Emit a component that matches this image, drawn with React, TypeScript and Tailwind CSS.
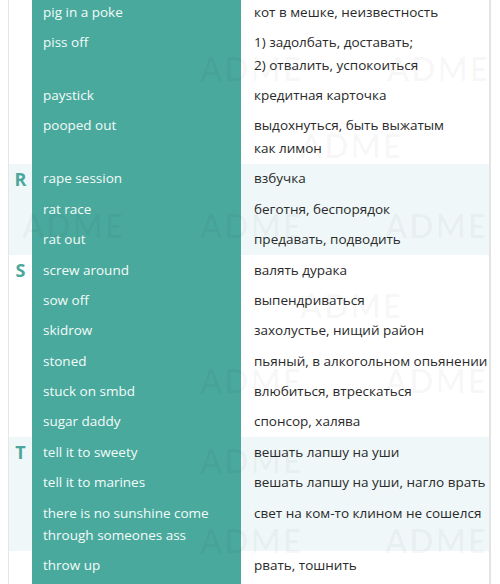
type Row = { en: string[]; ru: string[] };
type Section = { letter: string; tint: boolean; rows: Row[] };

const sections: Section[] = [
  {
    letter: '',
    tint: false,
    rows: [
      { en: ['pig in a poke'], ru: ['кот в мешке, неизвестность'] },
      { en: ['piss off'], ru: ['1) задолбать, доставать;', '2) отвалить, успокоиться'] },
      { en: ['paystick'], ru: ['кредитная карточка'] },
      { en: ['pooped out'], ru: ['выдохнуться, быть выжатым', 'как лимон'] },
    ],
  },
  {
    letter: 'R',
    tint: true,
    rows: [
      { en: ['rape session'], ru: ['взбучка'] },
      { en: ['rat race'], ru: ['беготня, беспорядок'] },
      { en: ['rat out'], ru: ['предавать, подводить'] },
    ],
  },
  {
    letter: 'S',
    tint: false,
    rows: [
      { en: ['screw around'], ru: ['валять дурака'] },
      { en: ['sow off'], ru: ['выпендриваться'] },
      { en: ['skidrow'], ru: ['захолустье, нищий район'] },
      { en: ['stoned'], ru: ['пьяный, в алкогольном опьянении'] },
      { en: ['stuck on smbd'], ru: ['влюбиться, втрескаться'] },
      { en: ['sugar daddy'], ru: ['спонсор, халява'] },
    ],
  },
  {
    letter: 'T',
    tint: true,
    rows: [
      { en: ['tell it to sweety'], ru: ['вешать лапшу на уши'] },
      { en: ['tell it to marines'], ru: ['вешать лапшу на уши, нагло врать'] },
      { en: ['there is no sunshine come', 'through someones ass'], ru: ['свет на ком-то клином не сошелся'] },
    ],
  },
  {
    letter: '',
    tint: false,
    rows: [
      { en: ['throw up'], ru: ['рвать, тошнить'] },
      { en: ['\u00a0'], ru: ['\u00a0'] },
    ],
  },
];

// faint site watermark
const marks = [
  { x: 200, y: 58 }, { x: 387, y: 58 },
  { x: 300, y: 135 },
  { x: 22, y: 215 }, { x: 200, y: 215 }, { x: 385, y: 215 },
  { x: 300, y: 295 },
  { x: 200, y: 370 }, { x: 385, y: 370 },
  { x: 200, y: 450 },
  { x: 200, y: 530 }, { x: 385, y: 530 },
];

function Lines({ items }: { items: string[] }) {
  return (
    <>
      {items.map((t) => (
        <div key={t}>{t}</div>
      ))}
    </>
  );
}

export default function App() {
  return (
    <div className="relative w-[500px] h-[584px] overflow-hidden bg-white font-['Open_Sans',sans-serif] text-[13.5px] leading-[22.6px]">
      <div className="ml-[8px] w-[483px] -mt-[3.2px] border-l border-[#e6e6e6] border-r-2 border-r-[#e4e4e4]">
        {sections.map((s, i) => (
          <div key={i} className={`flex ${s.tint ? 'bg-[#eff7f8]' : 'bg-white'}`}>
            <div className="w-[23px] shrink-0 pt-[4px] text-center text-[18px] font-bold text-[#4ba79c]">
              {s.letter}
            </div>
            <div className="flex-1">
              {s.rows.map((r, j) => (
                <div key={j} className="grid grid-cols-[209px_1fr]">
                  <div className="bg-[#4aa99d] pl-[11px] py-[3.9px] text-[#f3fbf9]">
                    <Lines items={r.en} />
                  </div>
                  <div className="pl-[13px] py-[3.9px] text-[#2a2a2a]">
                    <Lines items={r.ru} />
                  </div>
                </div>
              ))}
            </div>
          </div>
        ))}
      </div>
      {marks.map((m, i) => (
        <div
          key={i}
          aria-hidden
          className="absolute pointer-events-none select-none font-['Lato',sans-serif] text-[32px] font-bold tracking-[2px] text-black/[0.03]"
          style={{ left: m.x, top: m.y }}
        >
          ADME
        </div>
      ))}
    </div>
  );
}
